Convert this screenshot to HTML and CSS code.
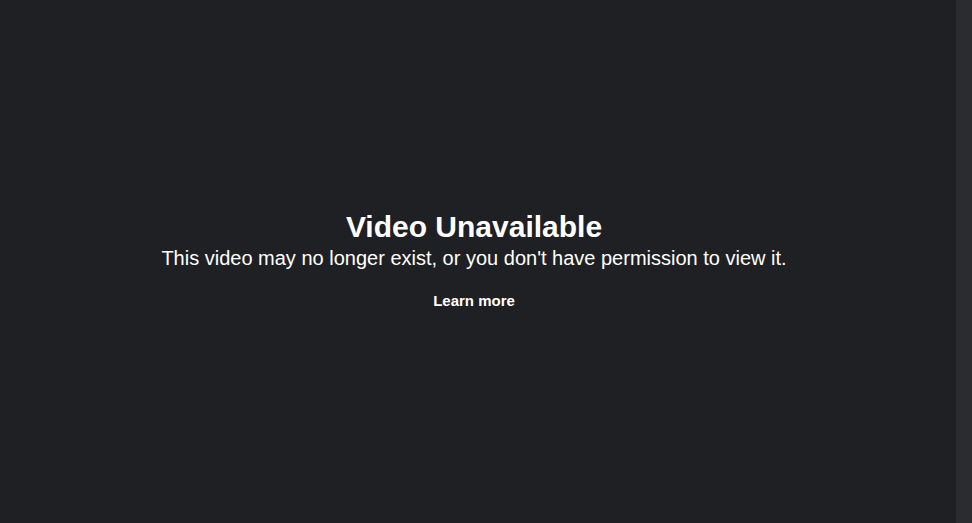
FILE: index.html
```html
<!DOCTYPE html>
<html>
<head>
<meta charset="utf-8">
<link rel="stylesheet" href="styles.css">
</head>
<body>
<div class="page">
  <main class="player">
    <div class="message">
      <h1 class="title">Video Unavailable</h1>
      <p class="subtitle">This video may no longer exist, or you don't have permission to view it.</p>
      <a class="learn" href="#">Learn more</a>
    </div>
  </main>
  <div class="scrollbar"></div>
</div>
</body>
</html>
```

FILE: styles.css
```css
html, body {
  margin: 0;
  padding: 0;
  height: 100%;
}
body {
  background: #1f2023;
  font-family: "Liberation Sans", Arial, sans-serif;
  color: #ffffff;
}
.page {
  display: flex;
  height: 100%;
}
.player {
  flex: 1;
  display: flex;
  align-items: center;
  justify-content: center;
  padding-right: 8px;
  padding-bottom: 4px;
}
.message {
  display: flex;
  flex-direction: column;
  align-items: center;
  text-align: center;
}
.title {
  margin: 0;
  font-size: 30px;
  font-weight: bold;
  line-height: 36px;
}
.subtitle {
  margin: 0;
  font-size: 20px;
  line-height: 26px;
}
.learn {
  margin-top: 20px;
  font-size: 15px;
  font-weight: bold;
  color: #ffffff;
  text-decoration: none;
  line-height: 20px;
}
.scrollbar {
  width: 16px;
  background: #2b2c2f;
}
```
